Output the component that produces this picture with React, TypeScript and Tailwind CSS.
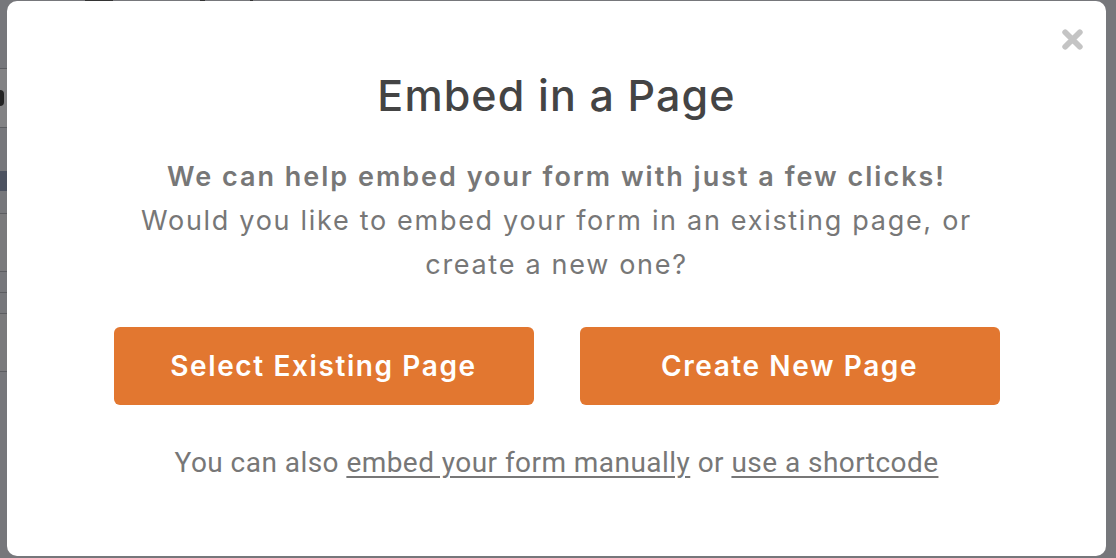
import { useState } from "react";

const font = { fontFamily: "Inter, 'Noto Sans', sans-serif" };

function CloseIcon() {
  return (
    <svg width="23" height="23" viewBox="0 0 22 22">
      <path
        d="M4 4 L18 18 M18 4 L4 18"
        stroke="#c4c4c4"
        strokeWidth="5.5"
        strokeLinecap="round"
      />
    </svg>
  );
}

// the page behind the overlay, only a sliver of it shows
function Backdrop() {
  return (
    <div className="flex h-[558px] w-full bg-[#76777b]">
      <div className="flex w-[7px] flex-col">
        <div className="h-[68px]" />
        <div className="h-px bg-[#5c5d61]" />
        <div className="flex h-[58px] items-center bg-[#828284]">
          <div className="h-[16px] w-[4px] rounded-r-full bg-[#222]" />
        </div>
        <div className="h-px bg-[#5c5d61]" />
        <div className="h-[43px]" />
        <div className="h-[20px] bg-[#4c5260]" />
        <div className="h-[22px]" />
        <div className="h-px bg-[#5c5d61]" />
        <div className="h-[57px] bg-[#7a7a7c]" />
        <div className="h-px bg-[#5c5d61]" />
        <div className="h-[20px]" />
        <div className="h-px bg-[#5c5d61]" />
        <div className="h-[20px]" />
        <div className="h-px bg-[#5c5d61]" />
        <div className="h-[57px] bg-[#7a7a7c]" />
        <div className="h-px bg-[#5c5d61]" />
      </div>
      <div className="flex-1">
        <div className="flex h-px">
          <div className="w-[78px]" />
          <div className="w-[28px] bg-[#333]" />
          <div className="w-[87px]" />
          <div className="w-[5px] bg-[#333]" />
          <div className="w-[45px]" />
          <div className="w-[3px] bg-[#333]" />
        </div>
      </div>
    </div>
  );
}

export default function App() {
  const [open, setOpen] = useState(true);

  return (
    <div className="relative h-[558px] w-[1116px] overflow-hidden" style={font}>
      <Backdrop />
      {open && (
        <div className="absolute left-[7px] top-[1px] flex h-[555px] w-[1099px] flex-col items-center rounded-[10px] bg-white pt-[69px]">
          <button
            onClick={() => setOpen(false)}
            className="absolute right-[22px] top-[27px] cursor-pointer"
            aria-label="Close"
          >
            <CloseIcon />
          </button>

          <h2 className="text-[43px] font-medium leading-[50px] tracking-[1.1px] text-[#444444]">
            Embed in a Page
          </h2>

          <div className="mt-[35px] text-center text-[27px] leading-[44px] text-[#777777]">
            <p className="font-semibold tracking-[2px]">
              We can help embed your form with just a few clicks!
            </p>
            <p className="tracking-[1.7px]">
              Would you like to embed your form in an existing page, or
            </p>
            <p className="tracking-[1.7px]">create a new one?</p>
          </div>

          <div className="mt-[40px] flex gap-[46px]">
            <button className="h-[78px] w-[420px] cursor-pointer rounded-[6px] bg-[#e27730] text-[28px] font-semibold tracking-[1.6px] text-white hover:bg-[#cd6622]">
              Select Existing Page
            </button>
            <button className="h-[78px] w-[420px] cursor-pointer rounded-[6px] bg-[#e27730] text-[28px] font-semibold tracking-[1.6px] text-white hover:bg-[#cd6622]">
              Create New Page
            </button>
          </div>

          <p
            className="mt-[42px] text-[28px] leading-[32px] tracking-[0.45px] text-[#777777]"
            style={{ fontFamily: "Roboto, Inter, sans-serif" }}
          >
            You can also{" "}
            <a href="#" className="underline underline-offset-4">
              embed your form manually
            </a>{" "}
            or{" "}
            <a href="#" className="underline underline-offset-4">
              use a shortcode
            </a>
          </p>
        </div>
      )}
    </div>
  );
}
